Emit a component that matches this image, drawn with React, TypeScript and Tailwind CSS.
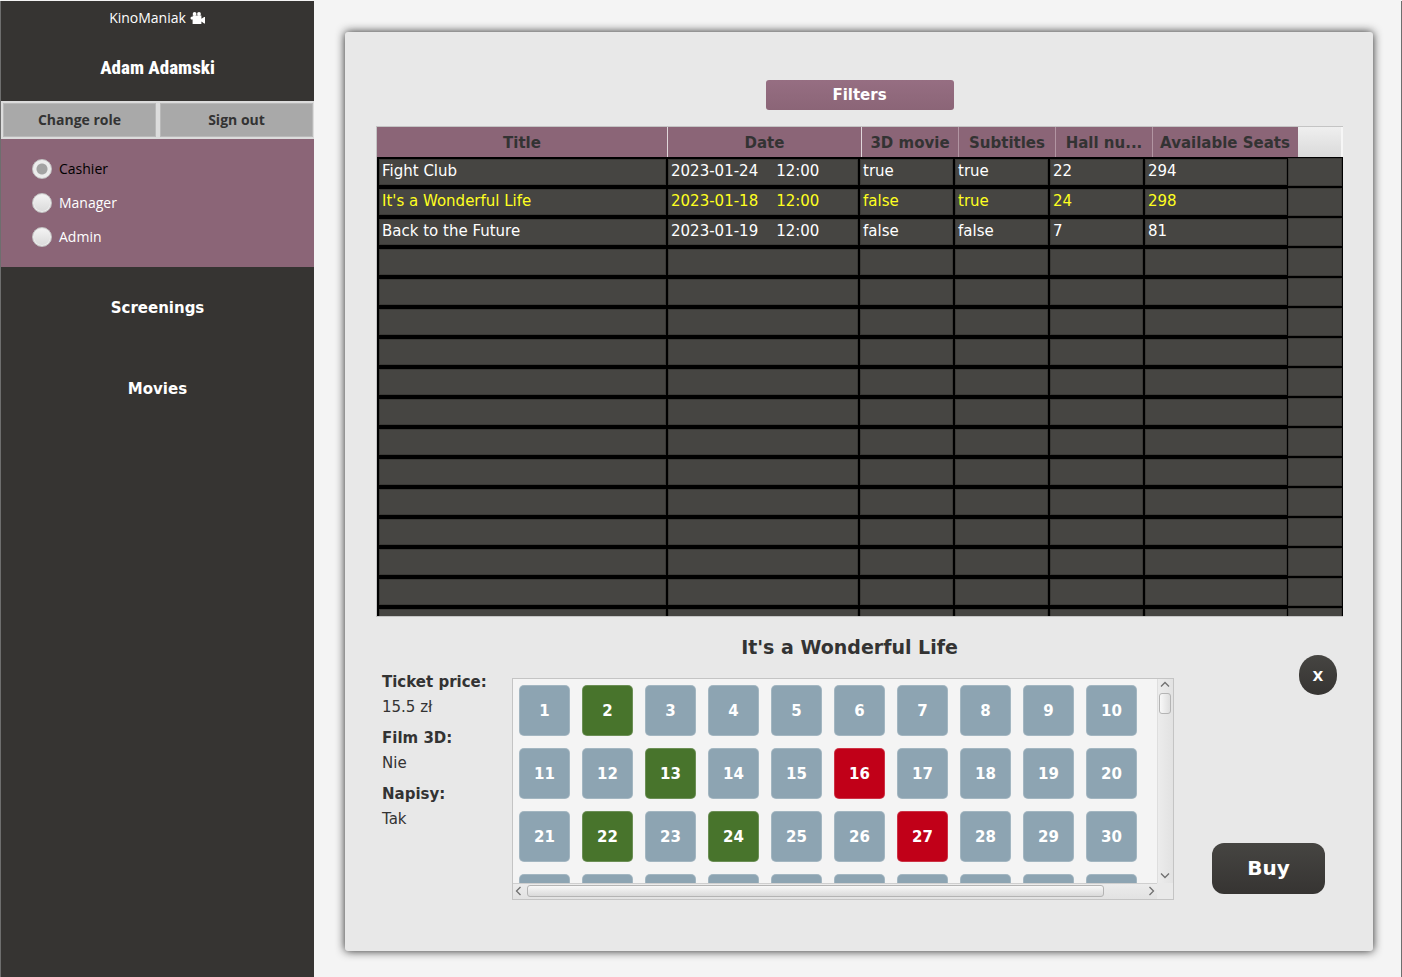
import React, { useState } from "react";

type Screening = {
  title: string;
  date: string;
  time: string;
  is3d: boolean;
  subtitles: boolean;
  hall: number;
  seats: number;
};

const screenings: Screening[] = [
  { title: "Fight Club", date: "2023-01-24", time: "12:00", is3d: true, subtitles: true, hall: 22, seats: 294 },
  { title: "It's a Wonderful Life", date: "2023-01-18", time: "12:00", is3d: false, subtitles: true, hall: 24, seats: 298 },
  { title: "Back to the Future", date: "2023-01-19", time: "12:00", is3d: false, subtitles: false, hall: 7, seats: 81 },
];

const headers = ["Title", "Date", "3D movie", "Subtitles", "Hall nu...", "Available Seats"];
const roles = ["Cashier", "Manager", "Admin"];
const details = [
  { label: "Ticket price:", value: "15.5 zł" },
  { label: "Film 3D:", value: "Nie" },
  { label: "Napisy:", value: "Tak" },
];
const takenSeats = [16, 27];

function CameraIcon() {
  return (
    <svg viewBox="0 0 16 13" className="h-[13px] w-4" fill="currentColor" aria-hidden="true">
      <circle cx="4.6" cy="2" r="1.9" />
      <circle cx="9" cy="2" r="1.9" />
      <path d="M2.6 3.4H11.4V6.8L14.2 5H15V11.4H14.2L11.4 9.6V11.9H2.6V7.6H1.2L0.6 6.9V5.5L1.2 4.8H2.6Z" />
    </svg>
  );
}

function Chevron({ d }: { d: string }) {
  return (
    <svg viewBox="0 0 10 10" className="size-2.5 shrink-0" fill="none" stroke="#707070" strokeWidth="1.3" aria-hidden="true">
      <path d={d} />
    </svg>
  );
}

function Sidebar() {
  const [role, setRole] = useState("Cashier");
  return (
    <aside className="w-[314px] shrink-0 border-l border-[#6e6e6e] bg-[#363432] text-white">
      <div className="flex h-[34px] items-center justify-center gap-1 font-['Open_Sans',sans-serif] text-sm">
        <span>KinoManiak</span>
        <CameraIcon />
      </div>
      <h1 className="flex h-[66px] items-center justify-center font-['Liberation_Sans_Narrow','Roboto_Condensed',sans-serif] text-[19px] font-extrabold">
        Adam Adamski
      </h1>
      <div className="grid grid-cols-2 gap-1 border-2 border-r border-[#dcdcdc] bg-[#dcdcdc] font-['Open_Sans',sans-serif] text-sm font-bold text-[#333]">
        <button className="h-[34px] border border-[#b9b9b9] bg-[#a9a9a9]">Change role</button>
        <button className="h-[34px] border border-[#b9b9b9] bg-[#a9a9a9]">Sign out</button>
      </div>
      <fieldset className="flex h-32 flex-col gap-3.5 bg-[#8b6577] pt-5 pl-[31px] font-['Open_Sans',sans-serif] text-sm">
        {roles.map((name) => (
          <label key={name} className="flex h-5 items-center gap-[7px] has-checked:text-black">
            <input
              type="radio"
              name="role"
              checked={role === name}
              onChange={() => setRole(name)}
              className="size-5 appearance-none rounded-full border border-[#c4c4c4] bg-linear-to-b from-[#f4f4f4] to-[#dadada] shadow-[inset_0_0_0_1px_#eeeeee] checked:bg-[radial-gradient(circle,#a3a3a3_0_5px,#ececec_6px)]"
            />
            {name}
          </label>
        ))}
      </fieldset>
      <nav className="flex flex-col items-center pt-px text-[15px] font-bold">
        <a href="#screenings" className="flex h-[81px] items-center">Screenings</a>
        <a href="#movies" className="flex h-[81px] items-center">Movies</a>
      </nav>
    </aside>
  );
}

const cell = "border-x border-y-2 border-black px-[3px] leading-6 shadow-[inset_0_0_0_1px_#3a3936] whitespace-pre";

function ScreeningsTable({ selected, onSelect }: { selected: number; onSelect: (i: number) => void }) {
  const rows = Array.from({ length: 16 }, (_, i) => screenings[i]);
  return (
    <div className="h-[491px] overflow-hidden border-y border-l border-[#c4c4c4]">
      <table className="block text-[15px]">
        <thead className="block">
          <tr className="grid h-[30px] grid-cols-[1fr_194px_97px_97px_97px_145px_45px] text-[#333]">
            {headers.map((h) => (
              <th
                key={h}
                className="truncate border-r border-[#b295a2] bg-[#8b6577] leading-8 font-bold first:border-[#e0d6da] nth-2:border-[#e0d6da] nth-6:border-[#8b6577]"
              >
                {h}
              </th>
            ))}
            <td className="border-r-2 border-[#f6f6f6] bg-linear-to-b from-[#efefef] to-[#dadada]" />
          </tr>
        </thead>
        <tbody className="block">
          {rows.map((s, i) => (
            <tr
              key={i}
              onClick={() => s && onSelect(i)}
              aria-selected={i === selected}
              className="grid h-[30px] grid-cols-[1fr_192px_95px_95px_95px_144px_54px] border-x border-black bg-[#464542] text-white aria-selected:text-[#ffff1f]"
            >
              <td className={cell}>{s?.title}</td>
              <td className={cell}>
                {s && (
                  <span className="flex gap-[18px]">
                    <span>{s.date}</span>
                    <span>{s.time}</span>
                  </span>
                )}
              </td>
              <td className={cell}>{s && String(s.is3d)}</td>
              <td className={cell}>{s && String(s.subtitles)}</td>
              <td className={cell}>{s?.hall}</td>
              <td className={cell}>{s?.seats}</td>
              <td className="border-y border-black shadow-[inset_0_0_0_1px_#3a3936]" />
            </tr>
          ))}
        </tbody>
      </table>
    </div>
  );
}

function SeatPicker() {
  const [chosen, setChosen] = useState([2, 13, 22, 24]);
  const toggle = (n: number) =>
    setChosen((c) => (c.includes(n) ? c.filter((x) => x !== n) : [...c, n]));
  const color = (n: number) =>
    takenSeats.includes(n) ? "bg-[#c10018]" : chosen.includes(n) ? "bg-[#48742c]" : "bg-[#8da4b2]";
  return (
    <div className="grid h-[222px] grid-cols-[1fr_16px] grid-rows-[1fr_16px] border border-[#c4c4c4] bg-[#e9e9e9]">
      <div className="overflow-auto bg-[#f4f4f4] p-1.5 [scrollbar-width:none]">
        <div className="grid grid-cols-[repeat(10,51px)] gap-3">
          {Array.from({ length: 40 }, (_, i) => i + 1).map((n) => (
            <button
              key={n}
              disabled={takenSeats.includes(n)}
              onClick={() => toggle(n)}
              className={`h-[51px] rounded-[5px] border border-white/20 pt-0.5 text-[15px] font-bold text-white ${color(n)}`}
            >
              {n}
            </button>
          ))}
        </div>
      </div>
      <div className="flex flex-col items-center border-l border-[#dedede] bg-linear-to-r from-[#ececec] to-[#e2e2e2] pr-0.5 pb-0.5">
        <Chevron d="M1 7.5 5 3.5 9 7.5" />
        <div className="mt-1 mb-auto h-[21px] w-3 rounded-[3px] border border-[#b4b4b4] bg-linear-to-r from-[#f8f8f8] to-[#dedede]" />
        <Chevron d="M1 2.5 5 6.5 9 2.5" />
      </div>
      <div className="flex items-center border-t border-[#cfcfcf] bg-linear-to-b from-[#ececec] to-[#e2e2e2] pb-0.5">
        <Chevron d="M7.5 1 3.5 5 7.5 9" />
        <div className="mr-[43px] ml-1 h-3 flex-1 rounded-[3px] border border-[#b4b4b4] bg-linear-to-b from-[#f8f8f8] to-[#dadada]" />
        <Chevron d="M2.5 1 6.5 5 2.5 9" />
      </div>
    </div>
  );
}

export default function App() {
  const [selected, setSelected] = useState(1);
  return (
    <div className="flex min-h-screen border-t border-[#f4f4f4] bg-[#f4f4f4] font-['DejaVu_Sans',sans-serif] text-[#333]">
      <Sidebar />
      <main className="flex min-w-0 flex-1 border-r border-[#6e6e6e] px-7 pt-[31px] pb-[26px] pl-[31px]">
        <section className="flex min-w-0 flex-1 flex-col rounded-[3px] bg-[#e8e8e8] px-[31px] pt-12 pr-[30px] shadow-[0_0_10px_rgba(0,0,0,0.85)]">
          <button className="mb-4 h-[30px] w-[188px] self-center rounded-[3px] bg-linear-to-b from-[#966e82] to-[#8b6577] text-[15px] font-bold text-white">
            Filters
          </button>
          <ScreeningsTable selected={selected} onSelect={setSelected} />
          <div className="grid grid-cols-[136px_1fr_169px]">
            <h2 className="col-span-3 pr-5 text-center text-[19px] leading-[61px] font-bold">
              {screenings[selected].title}
            </h2>
            <dl className="-mt-2 pl-1.5 text-[15px] leading-[25px]">
              {details.map((d) => (
                <div key={d.label} className="mb-1.5">
                  <dt className="font-bold">{d.label}</dt>
                  <dd>{d.value}</dd>
                </div>
              ))}
            </dl>
            <SeatPicker />
            <div className="-mt-[23px] flex flex-col items-end justify-between pb-1.5">
              <button className="mr-1.5 h-10 w-[38px] rounded-full bg-linear-to-b from-[#464542] to-[#363432] pt-0.5 text-sm font-bold text-white">
                X
              </button>
              <button className="mr-[18px] h-[51px] w-[113px] rounded-xl bg-linear-to-b from-[#464542] to-[#363432] pb-0.5 text-xl font-bold text-white">
                Buy
              </button>
            </div>
          </div>
        </section>
      </main>
    </div>
  );
}
